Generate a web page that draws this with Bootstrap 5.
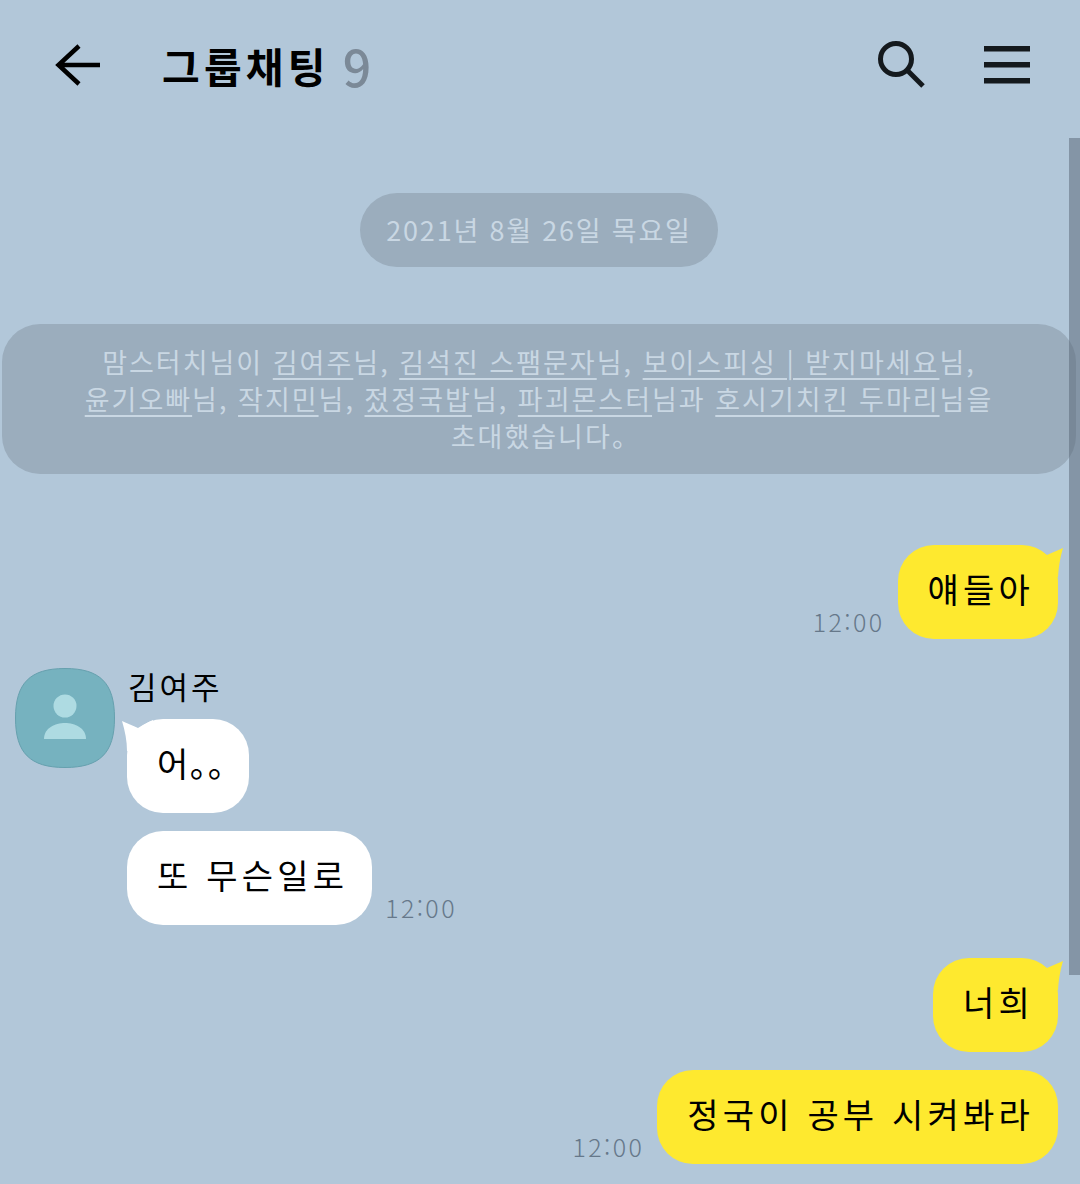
<!DOCTYPE html>
<html lang="ko">
<head>
  <meta charset="UTF-8">
  <title>그룹채팅</title>
  <meta name="viewport" content="width=device-width, initial-scale=1">
  <link href="https://cdn.jsdelivr.net/npm/bootstrap@5.3.3/dist/css/bootstrap.min.css" rel="stylesheet">
  <style>
    body {
      background: #b2c7d9;
      font-family: "Noto Sans CJK KR", "Noto Sans", sans-serif;
      color: #000;
      overflow: hidden;
    }
    .chat-page { position: relative; width: 1080px; height: 1184px; overflow: hidden; }

    /* top bar */
    .top-bar { height: 130px; padding-left: 55px; }
    .top-title { margin-left: 62px; font-size: 41px; font-weight: 700; line-height: 1; letter-spacing: 4.2px; }
    .top-count { margin-left: 13px; font-size: 50px; font-weight: 500; line-height: 1; color: #7b8997; }
    .top-icons { margin-left: auto; padding-right: 49px; gap: 57px; }

    /* scrollbar overlay */
    .scroll-thumb { position: absolute; top: 138px; right: 0; width: 11px; height: 837px; background: rgba(85, 100, 115, .5); }

    /* system messages */
    .date-pill {
      width: 358px; height: 74px; margin: 63px 0 0 360px;
      border-radius: 37px; background: #9badbd; color: #c9d7e3;
      font-size: 27px; letter-spacing: 1.8px;
    }
    .notice-box {
      margin: 57px 4px 0 2px; height: 150px; padding: 19px 0;
      border-radius: 38px; background: #9badbd; color: #c9d7e3;
      font-size: 27px; line-height: 37px; text-align: center;
      letter-spacing: 2px; white-space: nowrap;
    }
    .notice-box u { text-decoration-thickness: 2px; text-underline-offset: 5px; }

    /* messages */
    .msg-row { padding-right: 22px; }
    .bubble {
      position: relative; height: 94px; padding: 0 24px 0 30px;
      border-radius: 36px; font-size: 34px; line-height: 88px; letter-spacing: 4.2px; white-space: nowrap;
    }
    .bubble-me { background: #fee92f; }
    .bubble-other { background: #fff; }
    .bubble-tail { position: absolute; top: 0; width: 32px; height: 32px; }
    .bubble-me .bubble-tail { right: -5px; fill: #fee92f; }
    .bubble-other .bubble-tail { left: -6px; fill: #fff; }
    .dots-text { font-feature-settings: "palt"; }
    .bubble.dots-text { letter-spacing: 1px; }
    .msg-time { font-size: 25px; font-weight: 300; line-height: 1; color: #66788a; padding-bottom: 5px; letter-spacing: 2.4px; }
    .time-gap-me { gap: 13px; }
    .time-gap-other { gap: 13px; }
    .mt-first { margin-top: 71px; }
    .mt-next { margin-top: 18px; }

    .other-block { margin-top: 29px; padding-left: 15px; }
    .avatar-box { width: 100px; height: 100px; flex: none; }
    .other-col { margin-left: 12px; }
    .sender-name { height: 51px; padding-left: 1px; font-size: 31px; line-height: 36px; letter-spacing: 3px; }
    .mt-block { margin-top: 33px; }
  </style>
</head>
<body>
<div class="chat-page">

  <!-- Top bar -->
  <div class="top-bar d-flex align-items-center">
    <svg width="45" height="44" viewBox="0 0 45 44" fill="none" stroke="#000" stroke-width="4.5">
      <path d="M24 3 L3.5 22 L24 41 M3.5 22 H45"/>
    </svg>
    <span class="top-title">그룹채팅</span>
    <span class="top-count">9</span>
    <div class="top-icons d-flex align-items-center">
      <svg width="50" height="50" viewBox="0 0 50 50" fill="none" stroke="#14191d" stroke-width="5">
        <circle cx="19" cy="19" r="15.5"/>
        <path d="M30 30 L46 46"/>
      </svg>
      <svg width="47" height="38" viewBox="0 0 47 38" fill="#14191d">
        <rect x="0" y="0" width="46" height="5.5"/>
        <rect x="0" y="16" width="46" height="5.5"/>
        <rect x="0" y="32" width="46" height="5.5"/>
      </svg>
    </div>
  </div>

  <div class="scroll-thumb"></div>

  <!-- System messages -->
  <div class="date-pill d-flex align-items-center justify-content-center">2021년 8월 26일 목요일</div>
  <div class="notice-box">
    맘스터치님이 <u>김여주</u>님, <u>김석진 스팸문자</u>님, <u>보이스피싱 | 받지마세요</u>님,<br>
    <u>윤기오빠</u>님, <u>작지민</u>님, <u>젔정국밥</u>님, <u>파괴몬스터</u>님과 <u>호시기치킨 두마리</u>님을<br>
    초대했습니다<span class="dots-text">。</span>
  </div>

  <!-- Messages -->
  <div class="msg-row mt-first d-flex justify-content-end align-items-end time-gap-me">
    <span class="msg-time">12:00</span>
    <div class="bubble bubble-me">얘들아
      <svg class="bubble-tail" viewBox="0 0 32 32"><path d="M0 2 C6 3 12 8 16 10 C21 8 27 5 32 3 C30 10 28 18 27 32 L0 32 Z"/></svg>
    </div>
  </div>

  <div class="other-block d-flex">
    <div class="avatar-box">
      <svg width="100" height="100" viewBox="0 0 100 100">
        <path d="M50 0.5 C85 0.5 99.5 15 99.5 50 C99.5 85 85 99.5 50 99.5 C15 99.5 0.5 85 0.5 50 C0.5 15 15 0.5 50 0.5 Z" fill="#76b2bf" stroke="#66a0ae" stroke-width="1"/>
        <circle cx="50" cy="38" r="11.5" fill="#aedbe2"/>
        <path d="M29 71 C29 60 40 55 50 55 C60 55 71 60 71 71 Z" fill="#aedbe2"/>
      </svg>
    </div>
    <div class="other-col">
      <div class="sender-name">김여주</div>
      <div class="d-flex">
        <div class="bubble bubble-other dots-text">어。。
          <svg class="bubble-tail" viewBox="0 0 32 32"><path d="M1 2 C6 4 12 7 17 9 C22 6 27 3 32 1 L32 32 L6 32 C6 22 4 12 1 2 Z"/></svg>
        </div>
      </div>
      <div class="mt-next d-flex align-items-end time-gap-other">
        <div class="bubble bubble-other">또 무슨일로</div>
        <span class="msg-time">12:00</span>
      </div>
    </div>
  </div>

  <div class="msg-row mt-block d-flex justify-content-end">
    <div class="bubble bubble-me">너희
      <svg class="bubble-tail" viewBox="0 0 32 32"><path d="M0 2 C6 3 12 8 16 10 C21 8 27 5 32 3 C30 10 28 18 27 32 L0 32 Z"/></svg>
    </div>
  </div>
  <div class="msg-row mt-next d-flex justify-content-end align-items-end time-gap-me">
    <span class="msg-time">12:00</span>
    <div class="bubble bubble-me">정국이 공부 시켜봐라</div>
  </div>

</div>
<script src="https://cdn.jsdelivr.net/npm/bootstrap@5.3.3/dist/js/bootstrap.bundle.min.js"></script>
</body>
</html>
